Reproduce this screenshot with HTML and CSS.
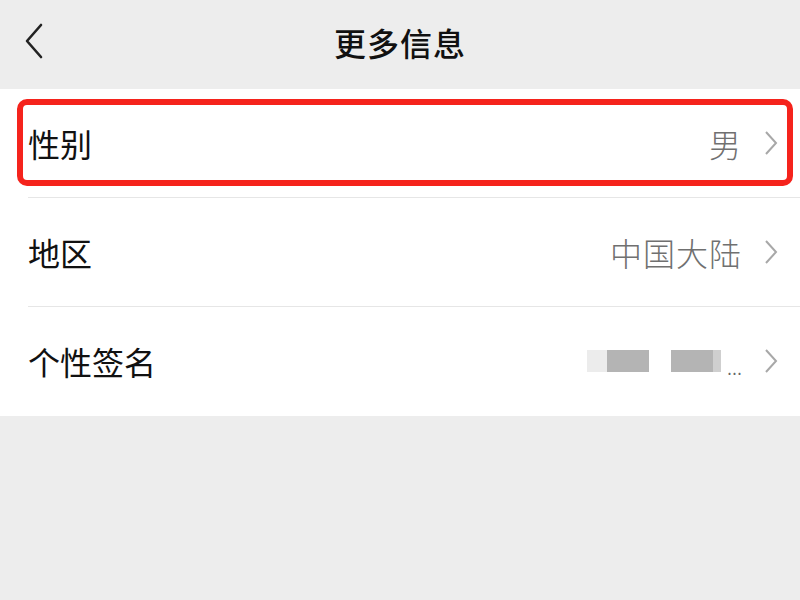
FILE: index.html
```html
<!DOCTYPE html>
<html lang="zh-CN">
<head>
  <meta charset="UTF-8">
  <title>更多信息</title>
  <link rel="stylesheet" href="styles.css">
</head>
<body>
  <div class="header">
    <svg class="back" width="20" height="36" viewBox="0 0 20 36">
      <polyline points="17,2 3,18 17,34" fill="none" stroke="#222" stroke-width="2.6" stroke-linecap="round" stroke-linejoin="round"/>
    </svg>
    <h1>更多信息</h1>
  </div>
  <div class="list">
    <div class="row">
      <span class="label">性别</span>
      <span class="value">男</span>
      <svg class="arrow" width="14" height="26" viewBox="0 0 14 26">
        <polyline points="2,2 12,13 2,24" fill="none" stroke="#a8a8a8" stroke-width="2"/>
      </svg>
      <div class="highlight"></div>
    </div>
    <div class="row">
      <span class="label">地区</span>
      <span class="value">中国大陆</span>
      <svg class="arrow" width="14" height="26" viewBox="0 0 14 26">
        <polyline points="2,2 12,13 2,24" fill="none" stroke="#a8a8a8" stroke-width="2"/>
      </svg>
    </div>
    <div class="row last">
      <span class="label">个性签名</span>
      <span class="value blurred">
        <i class="blk pale"></i><i class="blk dark"></i><i class="gap"></i><i class="blk dark"></i><i class="blk mid"></i><span class="dots">...</span>
      </span>
      <svg class="arrow" width="14" height="26" viewBox="0 0 14 26">
        <polyline points="2,2 12,13 2,24" fill="none" stroke="#a8a8a8" stroke-width="2"/>
      </svg>
    </div>
  </div>
</body>
</html>
```

FILE: styles.css
```css
body {
  margin: 0;
  background-color: #ededed;
  font-family: "Noto Sans CJK SC", "Noto Sans", sans-serif;
  color: #111;
}
.header {
  position: relative;
  height: 89px;
  display: flex;
  align-items: center;
  justify-content: center;
}
.header h1 {
  margin: 0;
  font-size: 32px;
  font-weight: 500;
  letter-spacing: 1px;
  margin-top: -6px;
}
.back {
  position: absolute;
  left: 24px;
  top: 23px;
}
.list {
  background: #fff;
  padding-bottom: 1px;
}
.row {
  position: relative;
  height: 108px;
  display: flex;
  align-items: center;
  padding: 0 22px 0 28px;
}
.row::after {
  content: "";
  position: absolute;
  left: 28px;
  right: 0;
  bottom: -1px;
  height: 1px;
  background: #e6e6e6;
}
.row + .row {
  margin-top: 1px;
}
.row.last::after {
  display: none;
}
.label {
  font-size: 32px;
  font-weight: 400;
  flex: 1;
}
.value {
  font-size: 32px;
  font-weight: 300;
  color: #707070;
  margin-right: 22px;
  letter-spacing: 1px;
}
.arrow {
  display: block;
}
.blurred {
  display: flex;
  align-items: center;
  letter-spacing: 0;
}
.blk {
  display: block;
  height: 22px;
}
.blk.pale {
  width: 20px;
  background: #ececec;
}
.blk.dark {
  width: 42px;
  background: #b4b4b4;
}
.blk.mid {
  width: 8px;
  background: #cfcfcf;
}
.gap {
  display: block;
  width: 22px;
}
.dots {
  font-size: 20px;
  color: #666;
  margin-left: 6px;
  padding-top: 10px;
}
.highlight {
  position: absolute;
  left: 17px;
  top: 10px;
  width: 764px;
  height: 75px;
  border: 6px solid #f5231c;
  border-radius: 10px;
}
```
